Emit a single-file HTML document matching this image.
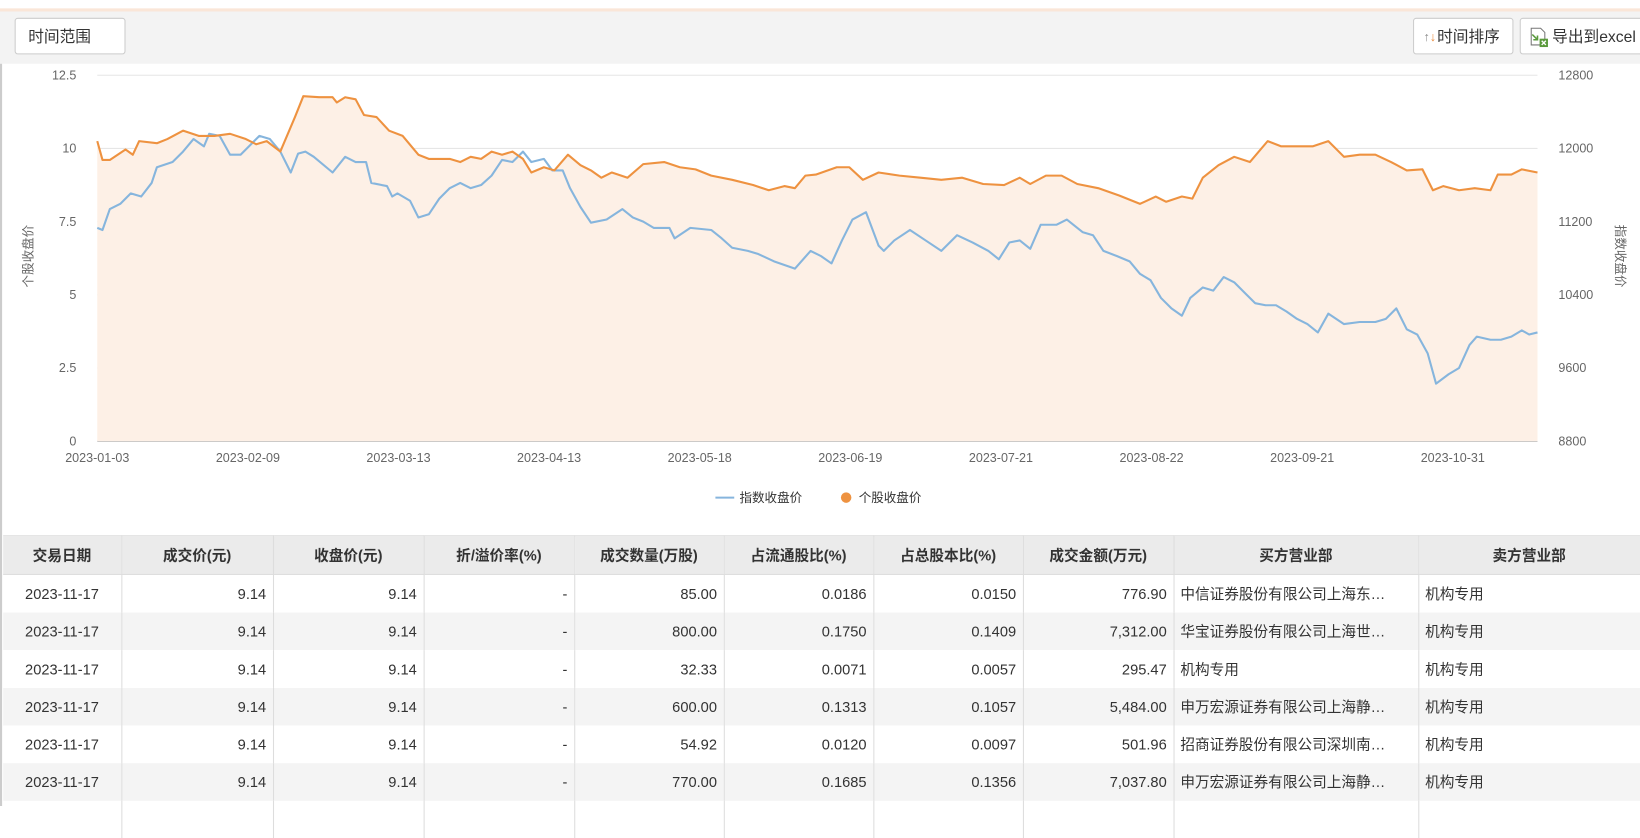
<!DOCTYPE html>
<html><head><meta charset="utf-8">
<style>
html,body{margin:0;padding:0;width:1640px;height:806px;overflow:hidden;background:#fff;}
#w{position:absolute;left:0;top:0;width:1568px;height:771px;transform:scale(1.04592,1.04540);transform-origin:0 0;font-family:"Liberation Sans","Noto Sans CJK SC",sans-serif;color:#333;}
.abs{position:absolute;}
.btn{position:absolute;top:17px;height:35px;border:1px solid #ccc;border-radius:3px;background:#fff;font-size:15px;line-height:35px;box-sizing:border-box;}
table{position:absolute;left:3px;top:512px;border-collapse:collapse;font-size:14px;table-layout:fixed;width:1565px;}
td,th{height:36px;padding:0 6px;border-right:1px solid #ddd;white-space:nowrap;overflow:hidden;text-overflow:ellipsis;}
th{background:#ebebeb;font-weight:bold;color:#333;text-align:center;border-top:1px solid #ddd;border-bottom:1px solid #ddd;}
td{text-align:right;color:#333}
td.c{text-align:center}td.l{text-align:left}
tr:nth-child(odd) td{background:#f4f4f4}
</style></head><body><div id="w">
<div class="abs" style="left:0;top:8px;width:1568px;height:3px;background:#fae6d8"></div>
<div class="abs" style="left:0;top:11px;width:1568px;height:50px;background:#f3f3f3"></div>
<div class="abs" style="left:0;top:61px;width:2px;height:710px;background:#ccc"></div>
<div class="btn" style="left:14px;width:106px;padding-left:12px;">时间范围</div>
<div class="btn" style="left:1351px;width:96px;padding-left:22px;"><span style="position:absolute;left:9px;top:0;font-size:12px;color:#888">↑<span style="color:#e8883a">↓</span></span>时间排序</div>
<div class="btn" style="left:1453px;width:130px;padding-left:30px;">
<svg class="abs" style="left:8px;top:8px" width="20" height="20" viewBox="0 0 20 20"><path d="M2 1h9l4 4v12H2z" fill="#fff" stroke="#777"/><path d="M3 7l5 5M8 8v4H4" stroke="#5a9a3c" stroke-width="1.5" fill="none"/><rect x="10" y="11" width="8" height="8" fill="#5a9a3c"/><path d="M12 13l4 4M16 13l-4 4" stroke="#fff" stroke-width="1.3"/></svg>导出到excel</div>
<svg class="abs" style="left:0;top:61px" width="1568" height="440" viewBox="0 61 1568 440" font-family="Liberation Sans,sans-serif">
<g stroke="#e6e6e6" stroke-width="1"><line x1="93" y1="72" x2="1470" y2="72"/><line x1="93" y1="142" x2="1470" y2="142"/><line x1="93" y1="212" x2="1470" y2="212"/><line x1="93" y1="282" x2="1470" y2="282"/><line x1="93" y1="352" x2="1470" y2="352"/></g>
<line x1="93" y1="422" x2="1470" y2="422" stroke="#999"/>
<g fill="#666" font-size="12" text-anchor="end"><text x="73" y="76">12.5</text><text x="73" y="146">10</text><text x="73" y="216">7.5</text><text x="73" y="286">5</text><text x="73" y="356">2.5</text><text x="73" y="426">0</text></g>
<g fill="#666" font-size="12"><text x="1490" y="76">12800</text><text x="1490" y="146">12000</text><text x="1490" y="216">11200</text><text x="1490" y="286">10400</text><text x="1490" y="356">9600</text><text x="1490" y="426">8800</text></g>
<g fill="#666" font-size="12" text-anchor="middle"><text x="93" y="442">2023-01-03</text><text x="237" y="442">2023-02-09</text><text x="381" y="442">2023-03-13</text><text x="525" y="442">2023-04-13</text><text x="669" y="442">2023-05-18</text><text x="813" y="442">2023-06-19</text><text x="957" y="442">2023-07-21</text><text x="1101" y="442">2023-08-22</text><text x="1245" y="442">2023-09-21</text><text x="1389" y="442">2023-10-31</text></g>
<text transform="translate(31,245) rotate(-90)" fill="#666" font-size="12" text-anchor="middle" font-family="Noto Sans CJK SC,sans-serif">个股收盘价</text>
<text transform="translate(1545,245) rotate(90)" fill="#666" font-size="12" text-anchor="middle" font-family="Noto Sans CJK SC,sans-serif">指数收盘价</text>
<polygon fill="#fdf0e6" points="93,422 93,135 98,153 105,153 120,143 127,148 133,135 150,137 160,133 175,125 190,130 205,130 220,128 235,133 245,138 255,135 268,145 282,112 290,92 305,93 318,93 322,98 330,93 340,95 348,110 360,112 372,125 385,130 400,148 410,152 430,152 440,155 450,150 460,152 470,145 480,148 490,145 500,152 508,165 520,160 530,163 543,148 555,158 565,163 575,170 585,165 600,170 615,157 635,155 650,160 665,162 680,168 700,172 720,177 735,182 750,178 760,180 770,168 780,167 800,160 812,160 825,172 840,165 860,168 880,170 900,172 920,170 940,176 960,177 975,170 985,176 1000,168 1015,168 1030,176 1050,180 1070,187 1090,195 1105,188 1115,193 1130,188 1140,190 1150,170 1165,158 1180,150 1195,155 1212,135 1225,140 1240,140 1255,140 1270,135 1285,150 1300,148 1315,148 1330,155 1345,163 1360,162 1370,182 1380,178 1395,182 1410,180 1425,182 1432,167 1445,167 1455,162 1470,165 1470,422"/>
<polyline fill="none" stroke="#86b5dd" stroke-width="2" stroke-linejoin="round" points="93,218 98,220 105,200 115,195 125,185 135,188 145,175 150,160 165,155 175,145 185,133 195,140 200,128 210,130 220,148 230,148 238,140 248,130 258,133 268,145 278,165 285,147 292,145 300,150 318,165 330,150 340,155 350,155 355,175 370,178 375,188 380,185 392,192 400,208 410,205 420,190 430,180 440,175 450,180 460,177 470,168 480,153 490,155 500,145 508,155 520,152 528,163 538,163 545,180 555,198 565,213 580,210 595,200 605,208 615,212 625,218 640,218 645,228 660,218 680,220 690,228 700,237 715,240 725,243 740,250 760,257 775,240 785,245 795,252 805,230 815,210 828,203 840,235 845,240 855,230 870,220 885,230 900,240 915,225 930,232 945,240 955,248 965,232 975,230 985,238 995,215 1010,215 1020,210 1035,222 1045,225 1055,240 1068,245 1080,250 1090,262 1100,268 1110,285 1120,295 1130,302 1138,285 1150,275 1160,278 1170,265 1180,270 1190,280 1200,290 1210,292 1220,292 1230,298 1240,305 1250,310 1260,318 1270,300 1285,310 1300,308 1315,308 1325,305 1335,295 1345,315 1355,320 1365,338 1373,367 1385,358 1395,352 1405,330 1412,322 1425,325 1435,325 1445,322 1455,316 1462,320 1470,318"/>
<polyline fill="none" stroke="#ee9240" stroke-width="2" stroke-linejoin="round" points="93,135 98,153 105,153 120,143 127,148 133,135 150,137 160,133 175,125 190,130 205,130 220,128 235,133 245,138 255,135 268,145 282,112 290,92 305,93 318,93 322,98 330,93 340,95 348,110 360,112 372,125 385,130 400,148 410,152 430,152 440,155 450,150 460,152 470,145 480,148 490,145 500,152 508,165 520,160 530,163 543,148 555,158 565,163 575,170 585,165 600,170 615,157 635,155 650,160 665,162 680,168 700,172 720,177 735,182 750,178 760,180 770,168 780,167 800,160 812,160 825,172 840,165 860,168 880,170 900,172 920,170 940,176 960,177 975,170 985,176 1000,168 1015,168 1030,176 1050,180 1070,187 1090,195 1105,188 1115,193 1130,188 1140,190 1150,170 1165,158 1180,150 1195,155 1212,135 1225,140 1240,140 1255,140 1270,135 1285,150 1300,148 1315,148 1330,155 1345,163 1360,162 1370,182 1380,178 1395,182 1410,180 1425,182 1432,167 1445,167 1455,162 1470,165"/>
<line x1="684" y1="476" x2="702" y2="476" stroke="#86b5dd" stroke-width="2"/>
<text x="707" y="480" font-size="12" fill="#333" font-family="Noto Sans CJK SC,sans-serif">指数收盘价</text>
<circle cx="809" cy="476" r="5" fill="#ee9240"/>
<text x="821" y="480" font-size="12" fill="#333" font-family="Noto Sans CJK SC,sans-serif">个股收盘价</text>
</svg>
<table>
<colgroup><col style="width:113px"><col style="width:145px"><col style="width:144px"><col style="width:144px"><col style="width:143px"><col style="width:143px"><col style="width:143px"><col style="width:144px"><col style="width:234px"><col style="width:212px"></colgroup>
<tr><th>交易日期</th><th>成交价(元)</th><th>收盘价(元)</th><th>折/溢价率(%)</th><th>成交数量(万股)</th><th>占流通股比(%)</th><th>占总股本比(%)</th><th>成交金额(万元)</th><th>买方营业部</th><th>卖方营业部</th></tr>
<tr><td class="c">2023-11-17</td><td>9.14</td><td>9.14</td><td>-</td><td>85.00</td><td>0.0186</td><td>0.0150</td><td>776.90</td><td class="l">中信证券股份有限公司上海东…</td><td class="l">机构专用</td></tr>
<tr><td class="c">2023-11-17</td><td>9.14</td><td>9.14</td><td>-</td><td>800.00</td><td>0.1750</td><td>0.1409</td><td>7,312.00</td><td class="l">华宝证券股份有限公司上海世…</td><td class="l">机构专用</td></tr>
<tr><td class="c">2023-11-17</td><td>9.14</td><td>9.14</td><td>-</td><td>32.33</td><td>0.0071</td><td>0.0057</td><td>295.47</td><td class="l">机构专用</td><td class="l">机构专用</td></tr>
<tr><td class="c">2023-11-17</td><td>9.14</td><td>9.14</td><td>-</td><td>600.00</td><td>0.1313</td><td>0.1057</td><td>5,484.00</td><td class="l">申万宏源证券有限公司上海静…</td><td class="l">机构专用</td></tr>
<tr><td class="c">2023-11-17</td><td>9.14</td><td>9.14</td><td>-</td><td>54.92</td><td>0.0120</td><td>0.0097</td><td>501.96</td><td class="l">招商证券股份有限公司深圳南…</td><td class="l">机构专用</td></tr>
<tr><td class="c">2023-11-17</td><td>9.14</td><td>9.14</td><td>-</td><td>770.00</td><td>0.1685</td><td>0.1356</td><td>7,037.80</td><td class="l">申万宏源证券有限公司上海静…</td><td class="l">机构专用</td></tr>
<tr><td class="c"></td><td></td><td></td><td></td><td></td><td></td><td></td><td></td><td></td><td></td></tr>
</table>
</div></body></html>
